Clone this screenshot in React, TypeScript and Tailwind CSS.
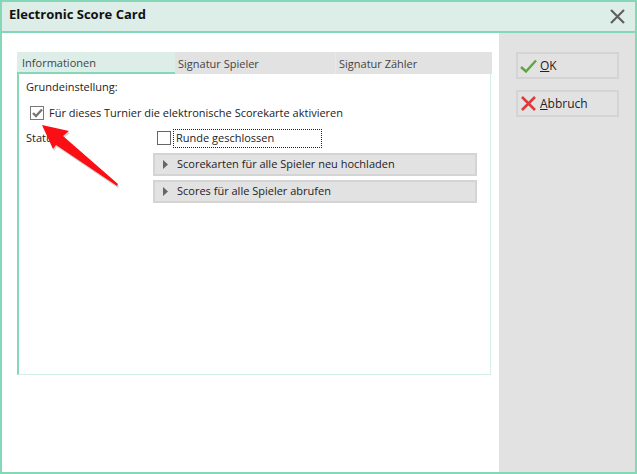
const FONT = "font-['Open_Sans',sans-serif]";

function ActionButton({ label, mnemonic, icon }: { label: string; mnemonic: string; icon: React.ReactNode }) {
  return (
    <button className="flex h-[27px] w-[103px] items-center border-[2px] border-[#d4d4d4] bg-[#e2e2e2] pl-[1px] text-[12px] text-[#222]">
      <span className="flex w-[19px] justify-center">{icon}</span>
      <span className="ml-[2px]">
        <span className="underline">{mnemonic}</span>
        {label}
      </span>
    </button>
  );
}

function BarButton({ label }: { label: string }) {
  return (
    <div className="flex h-[23px] w-[324px] items-center border-[2px] border-[#d4d4d4] bg-[#e2e2e2] pl-[8px] text-[11px] text-[#222]">
      <svg width="5" height="9" viewBox="0 0 5 9" className="mr-[9px]">
        <path d="M0 0 L5 4.5 L0 9 Z" fill="#666" />
      </svg>
      {label}
    </div>
  );
}

export default function App() {
  return (
    <div className={`${FONT} relative flex h-[474px] w-[637px] flex-col border-[2px] border-[#84d8b8] bg-white text-[#222]`}>
      <div className="flex h-[31px] shrink-0 items-center justify-between border-b-[2px] border-[#84d8b8] bg-[#dceee7] pl-[7px] pr-[10px]">
        <span className="mb-[5px] text-[13px] font-bold leading-none text-[#111]">Electronic Score Card</span>
        <svg width="15" height="15" viewBox="0 0 15 15">
          <path d="M1 1 L14 14 M14 1 L1 14" stroke="#606060" strokeWidth="2.2" fill="none" />
        </svg>
      </div>

      <div className="flex min-h-0 flex-1">
        <div className="flex-1 pl-[15px] pt-[19px]">
          <div className="flex h-[22px] w-[475px] bg-[#e2e2e2] text-[11px]">
            <div className="flex w-[158px] items-end border-b-[2px] border-[#84d8b8] bg-[#dceee7] pb-[1px] pl-[5px] text-[#444]">
              Informationen
            </div>
            <div className="flex w-[161px] items-end border-r border-[#dceee7] pb-[2px] pl-[3px] text-[#444]">
              Signatur Spieler
            </div>
            <div className="flex flex-1 items-end pb-[2px] pl-[3px] text-[#444]">Signatur Zähler</div>
          </div>

          <div className="h-[301px] w-[474px] border-b border-l-[2px] border-r border-b-[#d3efe6] border-l-[#84d8b8] border-r-[#d3efe6] pl-[7px] pt-[5px] text-[11px]">
            <div className="leading-[16px]">Grundeinstellung:</div>
            <div className="mt-[10px] flex items-center pl-[4px]">
              <span className="flex h-[14px] w-[14px] items-center justify-center border-[1.5px] border-[#777]">
                <svg width="11" height="10" viewBox="0 0 11 10">
                  <path d="M1 5 L4 8 L10 1.5" stroke="#777" strokeWidth="2.4" fill="none" />
                </svg>
              </span>
              <span className="ml-[5px] leading-[16px]">Für dieses Turnier die elektronische Scorekarte aktivieren</span>
            </div>

            <div className="mt-[8px] flex">
              <div className="w-[127px] pt-[1px] leading-[16px]">Status:</div>
              <div className="flex flex-col">
                <div className="flex items-center pl-[4px]">
                  <span className="mb-[2px] h-[14px] w-[14px] border-[1px] border-[#666]" />
                  <span className="ml-[2px] flex h-[19px] w-[149px] items-center border border-dotted border-[#222] pl-[2px] text-[11px]">
                    Runde geschlossen
                  </span>
                </div>
                <div className="mt-[5px] flex flex-col gap-[4px]">
                  <BarButton label="Scorekarten für alle Spieler neu hochladen" />
                  <BarButton label="Scores für alle Spieler abrufen" />
                </div>
              </div>
            </div>
          </div>
        </div>

        <div className="flex w-[136px] shrink-0 flex-col gap-[11px] bg-[#e2e2e2] pl-[17px] pt-[19px]">
          <ActionButton
            mnemonic="O"
            label="K"
            icon={
              <svg width="17" height="14" viewBox="0 0 17 14">
                <path d="M1 8 L6 12.5 L16 1.5" stroke="#5aa83c" strokeWidth="2.4" fill="none" />
              </svg>
            }
          />
          <ActionButton
            mnemonic="A"
            label="bbruch"
            icon={
              <svg width="15" height="15" viewBox="0 0 15 15">
                <path d="M1 1 L14 14 M14 1 L1 14" stroke="#e0383b" strokeWidth="2.6" fill="none" />
              </svg>
            }
          />
        </div>
      </div>

      {/* annotation arrow drawn on top of the dialog */}
      <svg className="pointer-events-none absolute left-[-2px] top-[-2px]" width="637" height="474" viewBox="0 0 637 474">
        <path
          d="M42 125 L69 131 L63 136 L118 184 L117 186 L56 145 L53 149 Z"
          fill="#888"
          opacity="0.35"
          transform="translate(1 2)"
        />
        <path d="M42 125 L69 131 L63 136 L118 184 L117 186 L56 145 L53 149 Z" fill="#fb0f14" />
      </svg>
    </div>
  );
}
